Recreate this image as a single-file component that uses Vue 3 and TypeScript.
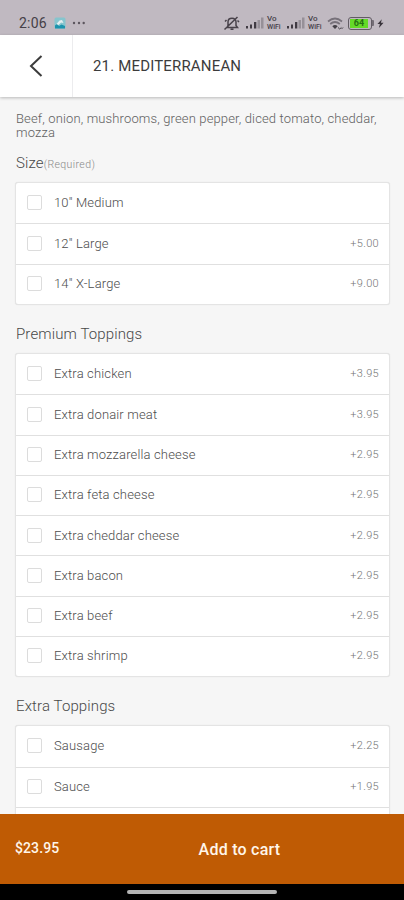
<script setup lang="ts">
interface Option {
  name: string
  price?: string
}
interface Group {
  title: string
  note?: string
  more?: boolean
  options: Option[]
}

const groups: Group[] = [
  {
    title: 'Size',
    note: '(Required)',
    options: [
      { name: '10" Medium' },
      { name: '12" Large', price: '+5.00' },
      { name: '14" X-Large', price: '+9.00' },
    ],
  },
  {
    title: 'Premium Toppings',
    options: [
      { name: 'Extra chicken', price: '+3.95' },
      { name: 'Extra donair meat', price: '+3.95' },
      { name: 'Extra mozzarella cheese', price: '+2.95' },
      { name: 'Extra feta cheese', price: '+2.95' },
      { name: 'Extra cheddar cheese', price: '+2.95' },
      { name: 'Extra bacon', price: '+2.95' },
      { name: 'Extra beef', price: '+2.95' },
      { name: 'Extra shrimp', price: '+2.95' },
    ],
  },
  {
    title: 'Extra Toppings',
    more: true,
    options: [
      { name: 'Sausage', price: '+2.25' },
      { name: 'Sauce', price: '+1.95' },
    ],
  },
]
</script>

<template>
  <div class="screen">
    <div class="status">
      <span class="time">2:06</span>
      <svg class="photo" width="12" height="12" viewBox="0 0 12 12">
        <rect x=".5" y=".5" width="11" height="11" rx="1.5" fill="#86c5ce" />
        <path d="M1 8.500 3 7l2 2 2.500-1.500L11 9v2.500H1z" fill="#1c93ad" />
        <path d="M2.500 7 5.500 3.500 8 3l1.500 3L7 5.500 4.500 8z" fill="#e4eeef" />
      </svg>
      <svg class="dots" width="14" height="4" viewBox="0 0 14 4" fill="#5c565e">
        <circle cx="2" cy="2" r="1.2" /><circle cx="7" cy="2" r="1.2" /><circle cx="11.700" cy="2" r="1.2" />
      </svg>
      <div class="indicators">
        <svg class="mute" width="18" height="15" viewBox="0 0 18 15" fill="none" stroke="#48424a" stroke-width="1.500">
          <path d="M4 11.500h10.500L13 9.500V6C13 3.500 11.500 2.300 9 2.300S5 3.500 5 6v3.500zM7.500 13.300h3M1.500 13.500 14.500 1M2 5.500 3.500 4M14.500 4.500 16 6" />
        </svg>
        <template v-for="n in 2" :key="n">
          <svg class="signal" width="18" height="12" viewBox="0 0 18 12">
            <path d="M0 9h2v2.500H0zM4 7.500h2v4H4zM8 5h2.300v6.500H8z" fill="#403b43" />
            <path d="M11.500 3h2.500v8.500h-2.500zM15 .5h2.500v11H15z" fill="#969098" />
          </svg>
          <span class="vowifi"><span>Vo</span><span class="small">WiFi</span></span>
        </template>
        <svg class="wifi" width="17" height="13" viewBox="0 0 17 13" fill="none">
          <path d="M1 4.500Q8 -1.500 15 4.500M3.200 7Q8 3 12.800 7" stroke="#77717a" stroke-width="1.700" />
          <path d="M5.300 9.200Q8 7 10.700 9.200L8 12z" fill="#444047" />
          <path d="m11 10.500 1.700 1.500 1.700-1.500M14.500 12l1.500-1.500" stroke="#444047" />
        </svg>
        <div class="battery"><span>64</span></div>
        <i class="nub"></i>
        <svg class="bolt" width="7" height="11" viewBox="0 0 8 11" fill="#39343b">
          <path d="M5.500.5.500 6H3.300L2.200 10.500 7.500 4.500H4.500z" />
        </svg>
      </div>
    </div>

    <header class="header">
      <button class="back" aria-label="Back">
        <svg width="14" height="22" viewBox="0 0 14 22" fill="none" stroke="#3c3c3c" stroke-width="2">
          <path d="M12.500 1 2 11l10.500 10" />
        </svg>
      </button>
      <h1>21. MEDITERRANEAN</h1>
    </header>

    <main class="content">
      <p class="description">Beef, onion, mushrooms, green pepper, diced tomato, cheddar, mozza</p>
      <section v-for="group in groups" :key="group.title" class="group">
        <h2>{{ group.title }}<small v-if="group.note">{{ group.note }}</small></h2>
        <div class="card">
          <label v-for="option in group.options" :key="option.name" class="row">
            <i class="box"></i>
            <span class="name">{{ option.name }}</span>
            <span class="price">{{ option.price }}</span>
          </label>
          <div v-if="group.more" class="row"></div>
        </div>
      </section>
    </main>

    <footer class="cart">
      <span class="total">$23.95</span>
      <span class="add">Add to cart</span>
    </footer>
    <div class="nav"><i></i></div>
  </div>
</template>

<style>
body {
  margin: 0;
}
</style>

<style scoped>
* {
  box-sizing: border-box;
}
.screen {
  width: 404px;
  height: 900px;
  overflow: hidden;
  display: flex;
  flex-direction: column;
  background: #f6f6f6;
  font-family: Roboto, "Liberation Sans", sans-serif;
}
.status {
  flex: 0 0 35px;
  display: flex;
  align-items: center;
  padding: 11px 20px 0 19px;
  background: #c0b9c1;
  color: #454047;
}
.time {
  width: 28px;
  font-size: 14px;
  letter-spacing: .2px;
  white-space: nowrap;
}
.photo {
  margin-left: 7px;
}
.dots {
  margin-left: 6px;
}
.indicators {
  margin-left: auto;
  display: flex;
  align-items: center;
}
.mute {
  margin-right: 1px;
}
.signal {
  margin-left: 4px;
}
.vowifi {
  display: flex;
  flex-direction: column;
  width: 16px;
  margin: 0 0 0 3px;
  font-size: 8px;
  line-height: 8px;
  font-weight: 500;
}
.vowifi .small {
  font-size: 7px;
  line-height: 8px;
}
.wifi {
  margin-left: 3px;
}
.battery {
  width: 24px;
  height: 13px;
  margin-left: 4px;
  padding: 1px;
  border: 1px solid #625c64;
  border-radius: 3px;
  display: flex;
}
.battery span {
  width: 18px;
  background: #65da28;
  color: #257013;
  font-size: 9px;
  line-height: 9px;
  font-weight: 700;
  text-align: center;
}
.nub {
  width: 2px;
  height: 6px;
  background: #746e76;
  border-radius: 0 1px 1px 0;
}
.bolt {
  margin-left: 3px;
}
.header {
  flex: 0 0 62px;
  display: flex;
  align-items: center;
  background: #fff;
  box-shadow: 0 1px 3px rgba(0, 0, 0, .25);
  z-index: 1;
}
.back {
  width: 73px;
  height: 100%;
  padding: 0;
  border: 0;
  border-right: 1px solid #ececee;
  background: none;
  display: flex;
  align-items: center;
  justify-content: center;
}
h1 {
  margin: 0 0 0 20px;
  font-size: 15px;
  font-weight: 400;
  letter-spacing: .17px;
  color: #3c3c3c;
}
.content {
  flex: 1 1 0;
  min-height: 0;
  overflow: hidden;
  padding: 15px 14px 0 15px;
}
.description {
  margin: 0 0 0 1px;
  font-size: 13px;
  line-height: 13.500px;
  font-weight: 300;
  letter-spacing: .14px;
  color: #606060;
}
.group {
  padding-top: 12px;
}
.group + .group {
  padding-top: 17.250px;
}
h2 {
  height: 31px;
  margin: 0 0 0 1px;
  padding-bottom: 6px;
  font-size: 15px;
  line-height: 25px;
  font-weight: 300;
  letter-spacing: .12px;
  color: #484848;
}
h2 small {
  font-size: 10.500px;
  letter-spacing: .4px;
  color: #888;
}
.card {
  background: #fff;
  border: 1px solid #e4e4e4;
  border-radius: 3px;
  box-shadow: 0 0 1px rgba(0, 0, 0, .12);
}
.row {
  display: flex;
  align-items: center;
  height: 40.250px;
  padding: 0 10px 1px 11px;
}
.row + .row {
  border-top: 1px solid #e0e0e0;
}
.box {
  width: 15px;
  height: 15px;
  border: 1px solid #dcdcdc;
  border-radius: 2px;
}
.name {
  margin-left: 12px;
  font-size: 13px;
  font-weight: 300;
  letter-spacing: .15px;
  color: #4c4c4c;
}
.price {
  margin-left: auto;
  font-size: 11px;
  font-weight: 300;
  letter-spacing: .3px;
  color: #757575;
}
.cart {
  flex: 0 0 70px;
  display: flex;
  align-items: center;
  background: #bf5b04;
  color: #fff6ea;
}
.total {
  width: 75px;
  padding: 0 0 2px 15px;
  font-size: 14px;
  font-weight: 500;
  letter-spacing: .1px;
}
.add {
  flex: 1;
  text-align: center;
  font-size: 16px;
  font-weight: 500;
  letter-spacing: .25px;
}
.nav {
  flex: 0 0 16px;
  background: #000;
  display: flex;
  align-items: center;
  justify-content: center;
}
.nav i {
  width: 150px;
  height: 4px;
  border-radius: 2px;
  background: #b4b4b4;
}
</style>
